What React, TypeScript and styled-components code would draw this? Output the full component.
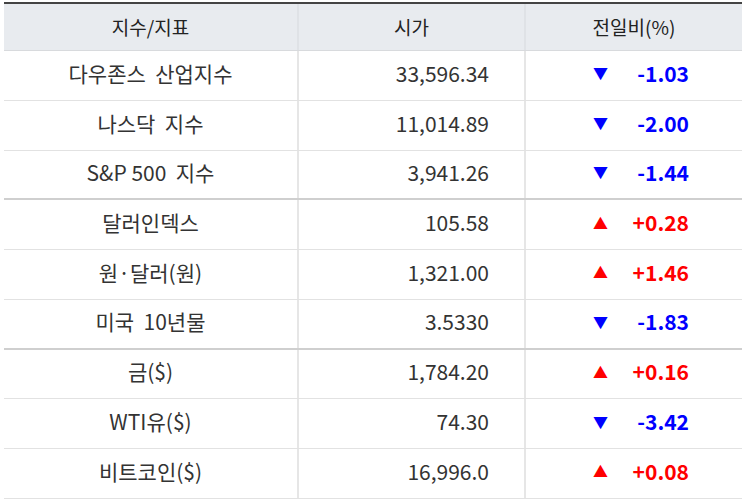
import React from 'react'
import styled, { createGlobalStyle } from 'styled-components'

type Row = { name: string; price: string; change: string; up: boolean; groupEnd?: boolean }

const ROWS: Row[] = [
	{ name: '다우존스  산업지수', price: '33,596.34', change: '-1.03', up: false },
	{ name: '나스닥  지수', price: '11,014.89', change: '-2.00', up: false },
	{ name: 'S&P 500  지수', price: '3,941.26', change: '-1.44', up: false, groupEnd: true },
	{ name: '달러인덱스', price: '105.58', change: '+0.28', up: true },
	{ name: '원·달러(원)', price: '1,321.00', change: '+1.46', up: true },
	{ name: '미국  10년물', price: '3.5330', change: '-1.83', up: false, groupEnd: true },
	{ name: '금($)', price: '1,784.20', change: '+0.16', up: true },
	{ name: 'WTI유($)', price: '74.30', change: '-3.42', up: false },
	{ name: '비트코인($)', price: '16,996.0', change: '+0.08', up: true },
]

const App = () => (
	<>
		<GlobalStyle />
		<Table>
			<Header>
				<HeadCell>지수/지표</HeadCell>
				<HeadCell>시가</HeadCell>
				<HeadCell $last>전일비(%)</HeadCell>
			</Header>
			{ROWS.map((r) => (
				<BodyRow key={r.name} $groupEnd={r.groupEnd}>
					<NameCell>{r.name}</NameCell>
					<PriceCell>{r.price}</PriceCell>
					<ChangeCell $up={r.up}>
						<Arrow>{r.up ? '▲' : '▼'}</Arrow>
						<Value>{r.change}</Value>
					</ChangeCell>
				</BodyRow>
			))}
		</Table>
	</>
)

export default App

const GlobalStyle = createGlobalStyle`
	*, *::before, *::after { box-sizing: border-box; }
	body {
		margin: 0;
		background: #fff;
		font-family: "Noto Sans CJK KR", "Noto Sans", sans-serif;
	}
`

const Table = styled.div`
	margin: 2px 2px 0 4px;
	width: 738px;
	border-top: 2px solid #444;
`

const Header = styled.div`
	display: grid;
	grid-template-columns: 295px 227px 216px;
	height: 47px;
	background: #e8ebef;
	border-bottom: 1px solid #d8dadd;
`

const HeadCell = styled.div<{ $last?: boolean }>`
	display: flex;
	align-items: center;
	justify-content: center;
	padding-bottom: 2px;
	font-size: 19px;
	color: #222;
	border-right: ${(p) => (p.$last ? 'none' : '2px solid #dfe2e6')};
`

const BodyRow = styled.div<{ $groupEnd?: boolean }>`
	display: grid;
	grid-template-columns: 295px 227px 216px;
	height: 49.75px;
	border-bottom: ${(p) => (p.$groupEnd ? '2px solid #cfcfcf' : '1px solid #e2e2e2')};
	font-size: 21px;
	color: #333;
	& > * {
		padding-bottom: 5px;
	}
`

const NameCell = styled.div`
	display: flex;
	align-items: center;
	justify-content: center;
	white-space: pre;
	border-right: 2px solid #e6e6e6;
`

const PriceCell = styled.div`
	display: flex;
	align-items: center;
	justify-content: flex-end;
	padding-right: 35px;
	border-right: 2px solid #e6e6e6;
`

const ChangeCell = styled.div<{ $up: boolean }>`
	display: flex;
	align-items: center;
	padding-left: 67px;
	color: ${(p) => (p.$up ? '#ff0000' : '#0000ff')};
`

const Arrow = styled.span`
	font-size: 15px;
	width: 28px;
`

const Value = styled.span`
	width: 68px;
	text-align: right;
	font-weight: 700;
`
